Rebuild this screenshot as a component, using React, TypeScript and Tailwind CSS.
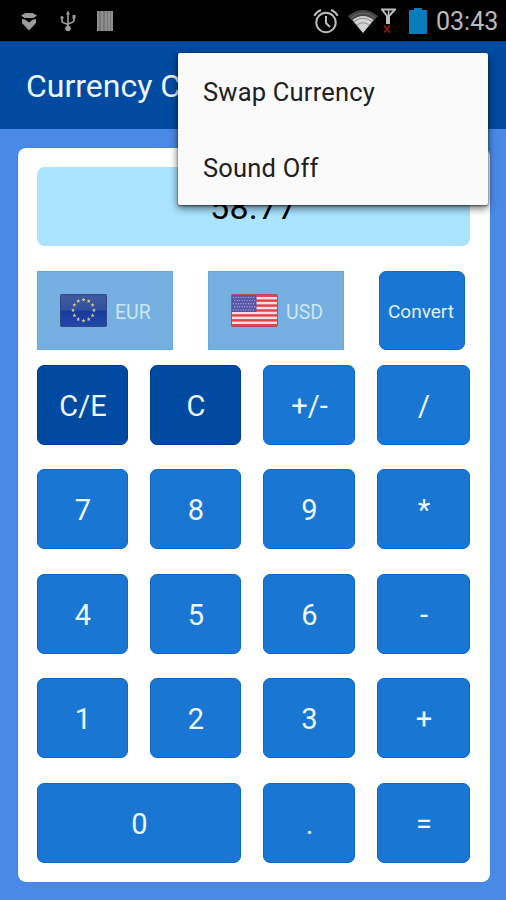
import React from 'react';

function StatusBar() {
  return (
    <header className="flex h-[41px] shrink-0 items-center bg-black text-[#9b9b9b]">
      <svg className="ml-[20px] h-[20px] w-[18px]" viewBox="0 0 18 20" fill="currentColor">
        <path d="M1 4.500L5.500 2H12.500L17 4.500L13.500 7H4.500Z" />
        <path d="M2 8L5 8.500L9 11.500L13 8.500L16 8V12L9 19.500L2 12Z" />
      </svg>
      <svg className="ml-[21px] h-[22px] w-[18px]" viewBox="0 0 18 22" fill="none" stroke="currentColor" strokeWidth="1.700">
        <path d="M9 3V18M3 7V11Q3 12.500 5 13L8 14Q9 14.500 9 16M15 7V10Q15 12 13 12.500L10 13.500Q9 14 9 16" />
        <path d="M9 .5L11 4.500H7Z" fill="currentColor" stroke="none" />
        <circle cx="9" cy="18.500" r="2.800" fill="currentColor" stroke="none" />
        <circle cx="3" cy="7.500" r="1.600" fill="currentColor" stroke="none" />
        <path d="M13.500 5H16.500V8.500H13.500Z" fill="currentColor" stroke="none" />
      </svg>
      <svg className="ml-[20px] h-[20px] w-[16px]" viewBox="0 0 16 20">
        <path d="M0 0H16V20H0Z" fill="#777" />
        <path d="M1 0V20M5 0V20M9 0V20M12 0V20M15 0V20" stroke="#969696" strokeWidth="1.500" />
      </svg>
      <div className="flex-1" />
      <svg className="h-[26px] w-[26px]" viewBox="0 0 26 26" fill="none" stroke="#bcbcbc" strokeWidth="2">
        <circle cx="13" cy="14.500" r="9.700" />
        <path d="M13 8V15L17 19" />
        <path d="M1.300 7.800Q3.500 3.500 8 2M24.700 7.800Q22.500 3.500 18 2" />
      </svg>
      <svg className="ml-[9px] h-[26px] w-[30px]" viewBox="0 0 30 26">
        <path d="M0 8Q15-4 30 8L15 25Z" fill="#464646" />
        <path d="M4.500 12Q15 4 25.500 12L15 25Z" fill="#d3d3d3" />
        <path d="M3 10Q15 0 27 10M6 13.500Q15 7 24 13.500M9 17Q15 12.500 21 17" fill="none" stroke="#777" strokeWidth=".8" />
      </svg>
      <svg className="ml-[3px] h-[26px] w-[15px]" viewBox="0 0 15 26" fill="none">
        <path d="M1 1.500H14L8 8V15H6V8Z" stroke="#bdbdbd" strokeWidth="2" />
        <path d="M7.500 2V8" stroke="#bdbdbd" strokeWidth="1.500" />
        <path d="M3 17.500L9 24.500M9 17.500L3 24.500" stroke="#9c1715" strokeWidth="1.500" />
      </svg>
      <svg className="ml-[13px] h-[26px] w-[18px]" viewBox="0 0 18 26">
        <path d="M5 0H13V2H18V26H0V2H5Z" fill="#087bb9" />
      </svg>
      <span className="mt-[2px] mr-[8px] ml-[9px] w-[62px] text-[25px] leading-none whitespace-nowrap text-[#bababa]">03:43</span>
    </header>
  );
}

function EuFlag() {
  const stars = Array.from({ length: 12 }, (_, i) => {
    const a = (i * Math.PI) / 6;
    return [23.5 + 10.5 * Math.sin(a), 16 - 10.5 * Math.cos(a)];
  });
  return (
    <svg className="h-[33px] w-[47px]" viewBox="0 0 47 33">
      <defs>
        <linearGradient id="eu" x2="0" y2="1">
          <stop stopColor="#415b9c" />
          <stop offset=".48" stopColor="#3250a0" />
          <stop offset=".52" stopColor="#183a98" />
          <stop offset="1" stopColor="#2449ac" />
        </linearGradient>
      </defs>
      <rect x=".5" y=".5" width="46" height="32" rx="1" fill="url(#eu)" stroke="#304783" />
      {stars.map(([x, y], i) => (
        <path key={i} transform={`translate(${x} ${y})`} d="M0-2L.6-.6L2-.5L.9.500L1.200 2L0 1.200L-1.200 2L-.9.500L-2-.5L-.6-.6Z" fill="#cfc785" />
      ))}
    </svg>
  );
}

function UsFlag() {
  const stripes = [0, 2, 4, 6, 8, 10, 12];
  return (
    <svg className="h-[33px] w-[47px]" viewBox="0 0 47 33">
      <rect x=".5" y=".5" width="46" height="32" rx="1" fill="#f3dfe3" />
      {stripes.map((s) => (
        <rect key={s} x=".5" y={0.5 + s * 2.46} width="46" height="2.460" fill="#e3434b" />
      ))}
      <rect x="1" y="1" width="24.500" height="17" fill="#5656a6" />
      {Array.from({ length: 45 }, (_, i) => {
        const row = Math.floor(i / 9);
        return <circle key={i} cx={2.5 + (i % 9) * 2.5 + (row % 2) * 1.2} cy={3.5 + row * 3.1} r=".7" fill="#aaa9d6" />;
      })}
      <rect x=".5" y=".5" width="46" height="32" rx="1" fill="none" stroke="#b44a5b" />
    </svg>
  );
}

function Currency({ code, flag }: { code: string; flag: React.ReactNode }) {
  return (
    <button className="flex h-[79px] w-[136px] items-center border border-[#6ba9dd] bg-[#75b0e0] pl-[22px] text-[19.5px] text-[#cce5f8]">
      {flag}
      <span className="mt-[4px] ml-[8px]">{code}</span>
    </button>
  );
}

function Key({ label, wide }: { label: string; wide?: boolean }) {
  const dark = label === 'C' || label === 'C/E';
  return (
    <button
      className={`flex items-center justify-center rounded-[7px] border pt-[3px] pl-[1px] text-[29px] leading-none text-[#eef7ff] ${
        dark ? 'border-[#003b9b] bg-[#004ba1]' : 'border-[#0d69c8] bg-[#1976d2]'
      } ${wide ? 'col-span-2' : ''}`}
    >
      {label}
    </button>
  );
}

const KEYS = ['C/E', 'C', '+/-', '/', '7', '8', '9', '*', '4', '5', '6', '-', '1', '2', '3', '+', '0', '.', '='];

export default function App() {
  return (
    <div className="relative flex h-[900px] w-[506px] flex-col overflow-hidden bg-[#4b89e6] font-[Roboto,sans-serif]">
      <StatusBar />
      <div className="flex h-[88px] shrink-0 items-center border-t border-[#003d8a] bg-[#004ba1] pl-[26px]">
        <h1 className="text-[32px] whitespace-nowrap text-[#edf5ff]">Currency C</h1>
      </div>
      <main className="mt-[19px] ml-[18px] flex h-[734px] w-[472px] flex-col rounded-[8px] bg-white pt-[19px] pl-[19px] shadow-[0_0_1px_#1976d2]">
        <div className="flex h-[79px] w-[433px] items-center justify-center rounded-[8px] bg-[#aae4ff] pt-[1px] text-[34px] tracking-[0.3px] text-black">
          58.77
        </div>
        <div className="mt-[25px] flex h-[78px]">
          <Currency code="EUR" flag={<EuFlag />} />
          <div className="ml-[35px]">
            <Currency code="USD" flag={<UsFlag />} />
          </div>
          <button className="ml-[35px] h-[79px] w-[86px] rounded-[7px] border border-[#0d69c8] bg-[#1976d2] pt-[3px] pr-[2px] text-[19px] text-[#e2f1ff]">
            Convert
          </button>
        </div>
        <div className="mt-[16px] grid h-[497px] w-[433px] grid-cols-[91px_91px_92px_93px] grid-rows-[repeat(5,80px)] gap-x-[22px] gap-y-[24.4px]">
          {KEYS.map((k) => (
            <Key key={k} label={k} wide={k === '0'} />
          ))}
        </div>
      </main>
      <div className="absolute top-[53px] left-[178px] flex h-[152px] w-[310px] flex-col rounded-[2px] bg-[#fafafa] text-[25.5px] tracking-[0.2px] text-[#202020] shadow-[0_3px_8px_rgba(0,0,0,0.6),0_1px_2px_rgba(0,0,0,0.5)]">
        <div className="flex h-[76px] items-center pt-[3px] pl-[25px]">Swap Currency</div>
        <div className="flex h-[76px] items-center pt-[2px] pl-[25px]">Sound Off</div>
      </div>
    </div>
  );
}
